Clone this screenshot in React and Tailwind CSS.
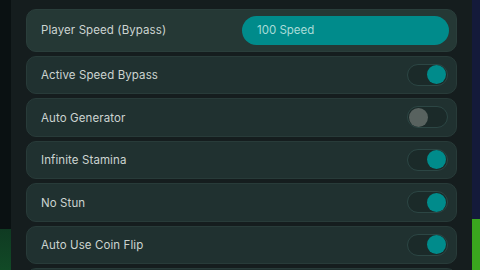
import React from "react";

const rows = [
  { label: "Active Speed Bypass", on: true },
  { label: "Auto Generator", on: false },
  { label: "Infinite Stamina", on: true },
  { label: "No Stun", on: true },
  { label: "Auto Use Coin Flip", on: true },
  { label: "", on: true },
];

function Toggle({ on }) {
  return (
    <div
      className={
        "w-[41px] h-[22px] rounded-full border border-[#2c4644] bg-[#1b2a29] flex items-center px-[1px] " +
        (on ? "justify-end" : "justify-start")
      }
    >
      <div
        className={
          "w-[19px] h-[19px] rounded-full " +
          (on ? "bg-[#008b8b]" : "bg-[#58625f]")
        }
      />
    </div>
  );
}

export default function App() {
  return (
    <div
      className="w-[480px] h-[270px] overflow-hidden flex bg-[#151d1e]"
      style={{ fontFamily: "Inter, 'Noto Sans', sans-serif" }}
    >
      <div className="w-[11px] h-full flex flex-col">
        <div className="h-[229px] bg-[#0a1112]" />
        <div className="flex-1 bg-gradient-to-b from-[#0f3a22] to-[#114a26]" />
      </div>
      <div className="flex-1 h-full bg-[#151d1e] px-[15px] pt-[9px] flex flex-col gap-[4px]">
        <div className="h-[42.5px] shrink-0 rounded-[10px] bg-[#253835] border border-[#2a3e3b] flex items-center justify-between pl-[14px] pr-[7px]">
          <span className="text-[11.5px] text-[#ccd4d1] tracking-[0.1px] mt-[1px]">Player Speed (Bypass)</span>
          <div className="w-[207px] h-[29px] rounded-full bg-[#008b8b] flex items-center pl-[15px]">
            <span className="text-[11.5px] text-[#a9dcd8] mt-[1px]">100 Speed</span>
          </div>
        </div>
        {rows.map((r, i) => (
          <div
            key={i}
            className="h-[38.5px] shrink-0 rounded-[10px] bg-[#203130] border border-[#283b39] flex items-center justify-between pl-[14px] pr-[8px]"
          >
            <span className="text-[11.5px] text-[#ccd4d1] tracking-[0.1px] mt-[2px]">{r.label}</span>
            <Toggle on={r.on} />
          </div>
        ))}
      </div>
      <div className="w-[8px] h-full flex flex-col">
        <div className="h-[219px] bg-[#141a3a]" />
        <div className="flex-1 bg-[#3aa61e]" />
      </div>
    </div>
  );
}
